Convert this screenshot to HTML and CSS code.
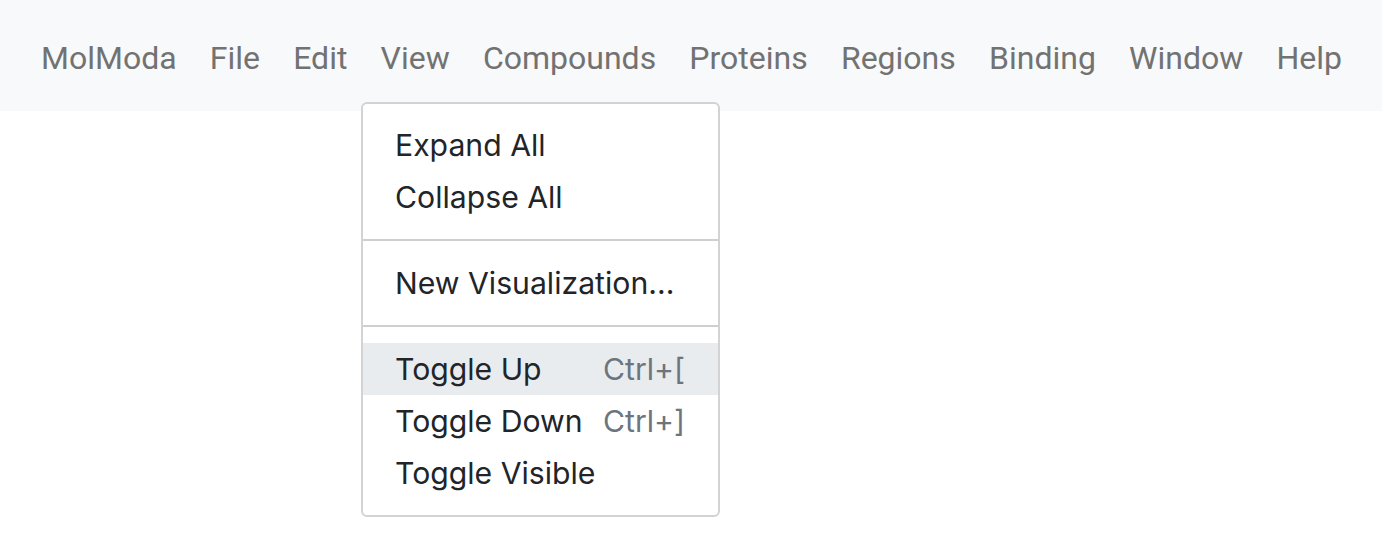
FILE: index.html
```html
<!DOCTYPE html>
<html lang="en">
<head>
<meta charset="utf-8">
<title>MolModa</title>
<link rel="stylesheet" href="styles.css">
</head>
<body>
<nav class="navbar">
  <ul class="nav">
    <li class="nav-link">MolModa</li>
    <li class="nav-link">File</li>
    <li class="nav-link">Edit</li>
    <li class="nav-link">View</li>
    <li class="nav-link">Compounds</li>
    <li class="nav-link">Proteins</li>
    <li class="nav-link">Regions</li>
    <li class="nav-link">Binding</li>
    <li class="nav-link">Window</li>
    <li class="nav-link">Help</li>
  </ul>
</nav>
<div class="dropdown-menu">
  <div class="dropdown-item"><span class="label">Expand All</span></div>
  <div class="dropdown-item"><span class="label">Collapse All</span></div>
  <hr class="divider">
  <div class="dropdown-item"><span class="label">New Visualization...</span></div>
  <hr class="divider">
  <div class="dropdown-item active"><span class="label">Toggle Up</span><span class="shortcut">Ctrl+[</span></div>
  <div class="dropdown-item"><span class="label">Toggle Down</span><span class="shortcut">Ctrl+]</span></div>
  <div class="dropdown-item"><span class="label">Toggle Visible</span></div>
</div>
</body>
</html>
```

FILE: styles.css
```css
html, body {
  margin: 0;
  padding: 0;
  background: #ffffff;
}

body {
  font-family: Inter, "Noto Sans", sans-serif;
}

.navbar {
  background: #f8f9fa;
  height: 111px;
  box-sizing: border-box;
  padding-top: 40px;
}

.nav {
  list-style: none;
  margin: 0;
  padding: 0 0 0 41px;
  display: flex;
  gap: 33.2px;
}

.nav-link {
  font-family: Roboto, "Liberation Sans", sans-serif;
  font-size: 32px;
  line-height: 37.5px;
  color: #727272;
  white-space: nowrap;
}

.dropdown-menu {
  position: absolute;
  left: 361px;
  top: 102px;
  width: 359px;
  box-sizing: border-box;
  border: 2px solid #d3d3d3;
  border-radius: 6px;
  background: #ffffff;
  padding: 15px 0 16px;
}

.dropdown-item {
  display: grid;
  grid-template-columns: 208px auto;
  padding: 0 0 0 32px;
  height: 52px;
  line-height: 52px;
  font-size: 30.2px;
  color: #212529;
  white-space: nowrap;
}

.dropdown-item.active {
  background: #e9ecef;
}

.shortcut {
  color: #6c757d;
}

.divider {
  margin: 16px 0;
  border: 0;
  border-top: 2px solid #cfcfcf;
  height: 0;
}
```
